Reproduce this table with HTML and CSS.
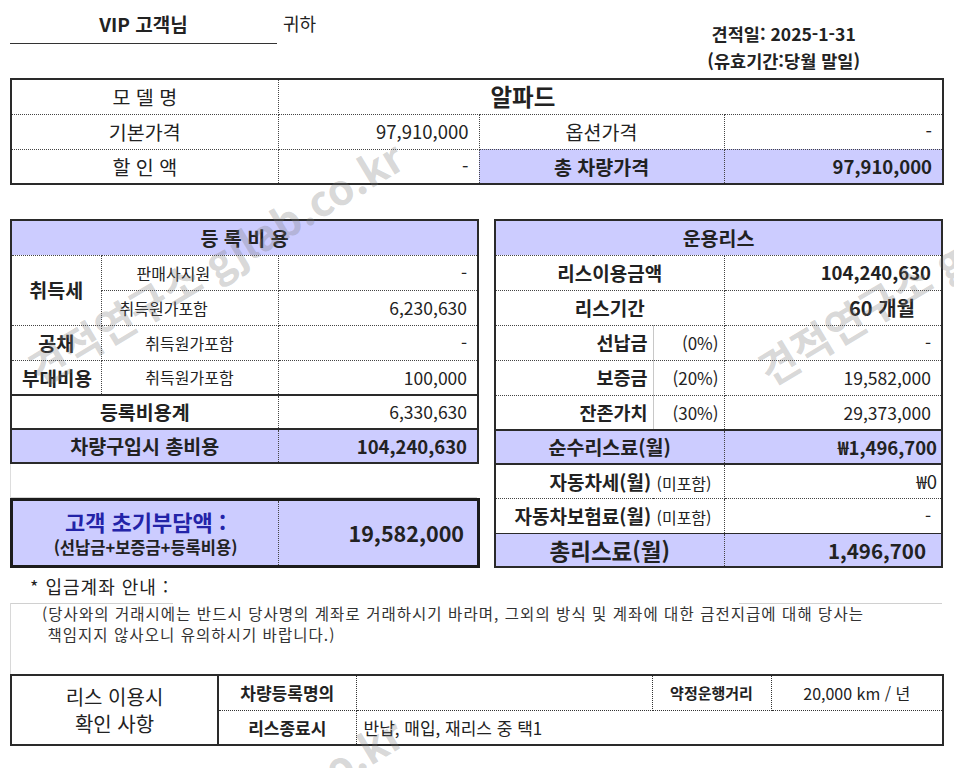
FILE: index.html
```html
<!DOCTYPE html>
<html lang="ko">
<head>
<meta charset="utf-8">
<title>견적서</title>
<link rel="stylesheet" href="styles.css">
</head>
<body>
<div class="page">
  <header class="head">
    <div class="cust">VIP 고객님</div>
    <div class="gwiha">귀하</div>
    <div class="date">
      <div>견적일: 2025-1-31</div>
      <div>(유효기간:당월 말일)</div>
    </div>
  </header>

  <table class="tbl t1">
    <colgroup><col class="c267"><col class="c201"><col class="c245"><col class="c219"></colgroup>
    <tr>
      <td class="ctr lg">모 델 명</td>
      <td colspan="3" class="model">알파드</td>
    </tr>
    <tr>
      <td class="ctr lg">기본가격</td>
      <td class="num n1">97,910,000</td>
      <td class="ctr lg">옵션가격</td>
      <td class="num n1">-</td>
    </tr>
    <tr>
      <td class="ctr lg">할 인 액</td>
      <td class="num n1">-</td>
      <td class="ctr b hl lg">총 차량가격</td>
      <td class="num b hl n2">97,910,000</td>
    </tr>
  </table>

  <div class="mid">
    <div class="leftcol">
      <table class="tbl t2">
        <colgroup><col class="c90"><col class="c177"><col class="c200"></colgroup>
        <tr><td colspan="3" class="ctr b hl lg">등 록 비 용</td></tr>
        <tr>
          <td rowspan="2" class="ctr b lg">취득세</td>
          <td class="sub p35">판매사지원</td>
          <td class="num">-</td>
        </tr>
        <tr>
          <td class="sub p18">취득원가포함</td>
          <td class="num">6,230,630</td>
        </tr>
        <tr>
          <td class="ctr b lg">공채</td>
          <td class="sub ctr">취득원가포함</td>
          <td class="num">-</td>
        </tr>
        <tr>
          <td class="ctr b md">부대비용</td>
          <td class="sub ctr">취득원가포함</td>
          <td class="num">100,000</td>
        </tr>
        <tr class="solid">
          <td colspan="2" class="ctr b lg">등록비용계</td>
          <td class="num">6,330,630</td>
        </tr>
        <tr class="solid">
          <td colspan="2" class="ctr b hl lg">차량구입시 총비용</td>
          <td class="num b hl n2">104,240,630</td>
        </tr>
      </table>
      <div class="spacer"></div>
      <table class="tbl box">
        <colgroup><col class="c267"><col class="c200"></colgroup>
        <tr>
          <td class="ctr hl boxlbl">
            <div class="blue">고객 초기부담액 :</div>
            <div class="boxsub">(선납금+보증금+등록비용)</div>
          </td>
          <td class="num hl boxval">19,582,000</td>
        </tr>
      </table>
    </div>

    <table class="tbl t3">
      <colgroup><col class="c158"><col class="c71"><col class="c218"></colgroup>
      <tr><td colspan="3" class="ctr b hl lg">운용리스</td></tr>
      <tr>
        <td colspan="2" class="ctr b md">리스이용금액</td>
        <td class="num b n2">104,240,630</td>
      </tr>
      <tr>
        <td colspan="2" class="ctr b md">리스기간</td>
        <td class="num b months">60 개월</td>
      </tr>
      <tr>
        <td class="rlbl b">선납금</td>
        <td class="pct">(0%)</td>
        <td class="num">-</td>
      </tr>
      <tr>
        <td class="rlbl b">보증금</td>
        <td class="pct">(20%)</td>
        <td class="num">19,582,000</td>
      </tr>
      <tr>
        <td class="rlbl b">잔존가치</td>
        <td class="pct">(30%)</td>
        <td class="num">29,373,000</td>
      </tr>
      <tr class="solid">
        <td colspan="2" class="ctr b hl lg">순수리스료(월)</td>
        <td class="num b hl won">₩1,496,700</td>
      </tr>
      <tr class="solid">
        <td colspan="2" class="tax"><span class="b">자동차세(월)</span> <span class="excl">(미포함)</span></td>
        <td class="num won">₩0</td>
      </tr>
      <tr>
        <td colspan="2" class="tax"><span class="b">자동차보험료(월)</span> <span class="excl">(미포함)</span></td>
        <td class="num">-</td>
      </tr>
      <tr class="thin">
        <td colspan="2" class="ctr b hl total">총리스료(월)</td>
        <td class="num b hl totalv">1,496,700</td>
      </tr>
    </table>
  </div>

  <div class="acct">* 입금계좌 안내 :</div>
  <div class="notice">
    <div class="nlines"><span class="nl1"></span><span class="nl2"></span></div>
    <p class="ntext">(당사와의 거래시에는 반드시 당사명의 계좌로 거래하시기 바라며, 그외의 방식 및 계좌에 대한 금전지급에 대해 당사는<br>&nbsp;책임지지 않사오니 유의하시기 바랍니다.)</p>
  </div>

  <table class="tbl t4">
    <colgroup><col class="c207"><col class="c138"><col class="c296"><col class="c119"><col class="c172"></colgroup>
    <tr>
      <td rowspan="2" class="ctr lease">리스 이용시<br>확인 사항</td>
      <td class="ctr b sm">차량등록명의</td>
      <td></td>
      <td class="ctr b xs">약정운행거리</td>
      <td class="ctr km">20,000 km / 년</td>
    </tr>
    <tr>
      <td class="ctr b sm">리스종료시</td>
      <td colspan="3" class="sm opt">반납, 매입, 재리스 중 택1</td>
    </tr>
  </table>

  <div class="wm wm1">견적연구소 gjlab.co.kr</div>
  <div class="wm wm2">견적연구소 gjlab.co.kr</div>
  <div class="wm wm3">견적연구소 gjlab.co.kr</div>
</div>
</body>
</html>
```

FILE: styles.css
```css
* { box-sizing: border-box; }
body {
  margin: 0;
  background: #fff;
  font-family: "Noto Sans CJK KR", "Noto Sans", sans-serif;
  color: #222;
}
.page {
  position: relative;
  width: 954px;
  height: 768px;
  overflow: hidden;
}

/* header */
.head {
  display: flex;
  align-items: flex-start;
  height: 78px;
}
.cust {
  margin-left: 10px;
  width: 267px;
  height: 44px;
  padding-top: 12px;
  border-bottom: 1px solid #333;
  text-align: center;
  font-size: 19px;
  font-weight: 700;
  line-height: 24px;
}
.gwiha {
  margin-left: 6px;
  padding-top: 11px;
  font-size: 18px;
  line-height: 24px;
}
.date {
  margin-left: auto;
  margin-right: 94px;
  padding-top: 20px;
  text-align: center;
  font-size: 17.5px;
  font-weight: 700;
  line-height: 27px;
}

/* tables */
.tbl {
  border-collapse: collapse;
  table-layout: fixed;
  border: 2px solid #2a2a2a;
}
.tbl td {
  height: 35px;
  padding: 0 10px;
  border: 1px dotted #444;
  font-size: 17.5px;
  line-height: 1;
  white-space: nowrap;
  vertical-align: middle;
}
.tbl tr.solid td { border-top: 2px solid #2a2a2a; height: 34px; }
.tbl tr.thin td { border-top: 1px solid #2a2a2a; height: 34px; }

.c267 { width: 267px; }
.c201 { width: 201px; }
.c245 { width: 245px; }
.c219 { width: 219px; }
.c90 { width: 90px; }
.c177 { width: 177px; }
.c200 { width: 200px; }
.c158 { width: 158px; }
.c71 { width: 71px; }
.c218 { width: 218px; }
.c207 { width: 207px; }
.c138 { width: 138px; }
.c296 { width: 296px; }
.c119 { width: 119px; }
.c172 { width: 172px; }

.ctr { text-align: center; }
.num { text-align: right; }
.b { font-weight: 700; }
.hl { background: #ccccff; }
.tbl td.lg { font-size: 19.5px; }
.tbl td.md { font-size: 19px; }
.tbl td.n1 { font-size: 18.5px; }
.tbl td.n2 { font-size: 18.5px; }

.t1 {
  margin-left: 10px;
  width: 932px;
}
.tbl td.model {
  padding-left: 212px;
  font-size: 23.5px;
  font-weight: 700;
}

.mid {
  display: flex;
  gap: 17px;
  margin: 34px 0 0 10px;
}
.leftcol {
  display: flex;
  flex-direction: column;
  width: 467px;
}
.t2 { width: 467px; }
.tbl td.sub { font-size: 16px; }
.tbl td.p35 { padding-left: 35px; }
.tbl td.p18 { padding-left: 18px; }

.spacer {
  height: 34px;
  border-left: 1px solid #ddd;
  border-bottom: 1px solid #d4d4d4;
}
.box {
  width: 467px;
  border: 3px solid #1c1c1c;
}
.tbl.box td { height: 67px; }
.blue {
  color: #2323a8;
  font-size: 22px;
  font-weight: 700;
  line-height: 24px;
}
.boxsub {
  margin-top: 4px;
  font-size: 16.5px;
  font-weight: 700;
  line-height: 20px;
}
.tbl td.boxval {
  font-size: 21.5px;
  font-weight: 700;
  padding-right: 13px;
}

.t3 { width: 447px; }
.tbl td.rlbl {
  text-align: right;
  padding-right: 5px;
  font-size: 18.5px;
  border-right: 1px solid #c8c8c8;
}
.tbl td.pct {
  text-align: right;
  padding-right: 5px;
  font-size: 17px;
}
.tbl td.months { padding-right: 26px; font-size: 20px; }
.tbl td.won { padding-right: 4px; font-size: 18.5px; }
.tbl td.tax {
  text-align: right;
  padding-right: 12px;
  font-size: 19px;
}
.excl { font-size: 16px; }
.tbl td.total { font-size: 22.5px; }
.tbl td.totalv { font-size: 20.5px; padding-right: 15px; }

/* notice */
.acct {
  margin: 7px 0 0 30px;
  font-size: 18px;
  line-height: 22px;
  letter-spacing: 1px;
}
.notice {
  margin: 6px 0 0 10px;
  width: 932px;
  height: 71px;
  border-left: 1px solid #d8d8d8;
}
.nlines {
  display: flex;
  justify-content: space-between;
}
.nl1 { width: 162px; border-top: 1px solid #d0d0d0; }
.nl2 { width: 203px; border-top: 1px solid #d0d0d0; }
.ntext {
  margin: -1px 0 0 31px;
  font-size: 15.5px;
  letter-spacing: 1.05px;
  line-height: 21px;
  color: #333;
}

.t4 {
  margin-left: 10px;
  width: 932px;
}
.t4 td { border-color: #333; }
.tbl td.lease {
  border-right: 2px solid #2a2a2a;
  font-size: 20px;
  line-height: 27px;
}
.tbl td.sm { font-size: 17px; }
.tbl td.xs { font-size: 15px; }
.tbl td.km { font-size: 16px; }
.tbl td.opt { padding-left: 7px; }

/* watermark */
.wm {
  position: absolute;
  font-size: 42px;
  font-weight: 700;
  line-height: 1;
  white-space: nowrap;
  color: rgba(120, 120, 120, 0.3);
  transform: rotate(-31deg);
  transform-origin: 0 100%;
  pointer-events: none;
}
.wm1 { left: 42px; top: 348px; }
.wm2 { left: 772px; top: 348px; }
.wm3 { left: 42px; top: 925px; }
```
